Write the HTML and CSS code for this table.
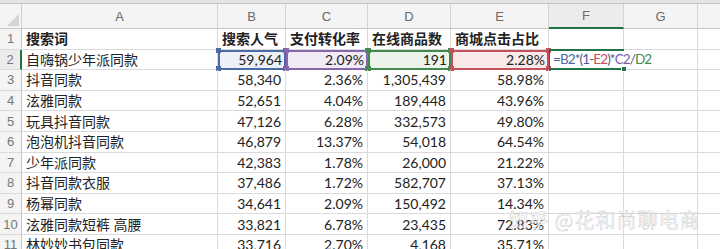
FILE: index.html
```html
<!DOCTYPE html>
<html lang="zh">
<head>
<meta charset="utf-8">
<link rel="stylesheet" href="styles.css">
</head>
<body>
<div class="frame">
  <div class="topband"></div>
  <div class="sheet">
    <div class="corner"><svg width="12" height="12" viewBox="0 0 12 12"><polygon points="12,0 12,12 0,12" fill="#d4d4d4"/></svg></div>
    <div class="ch">A</div><div class="ch">B</div><div class="ch">C</div><div class="ch">D</div><div class="ch">E</div><div class="ch ch-active">F</div><div class="ch">G</div><div class="ch ch-last"></div>

    <div class="rh">1</div>
    <div class="c b">搜索词</div><div class="c b">搜索人气</div><div class="c b">支付转化率</div><div class="c b">在线商品数</div><div class="c b">商城点击占比</div><div class="c"></div><div class="c"></div><div class="c last"></div>

    <div class="rh rh-active">2</div>
    <div class="c">自嗨锅少年派同款</div>
    <div class="c n ref ref-blue">59,964<i class="h tl"></i><i class="h tr"></i><i class="h bl"></i><i class="h br"></i></div>
    <div class="c n ref ref-purple">2.09%<i class="h tl"></i><i class="h tr"></i><i class="h bl"></i><i class="h br"></i></div>
    <div class="c n ref ref-green">191<i class="h tl"></i><i class="h tr"></i><i class="h bl"></i><i class="h br"></i></div>
    <div class="c n ref ref-red">2.28%<i class="h tl"></i><i class="h tr"></i><i class="h bl"></i><i class="h br"></i></div>
    <div class="c active"><span class="formula"><span class="f-op">=</span><span class="f-blue">B2</span><span class="f-op">*(1-</span><span class="f-red">E2</span><span class="f-op">)*</span><span class="f-purple">C2</span><span class="f-op">/</span><span class="f-green">D2</span></span><i class="fill"></i></div>
    <div class="c noleft"></div><div class="c last"></div>

    <div class="rh">3</div>
    <div class="c">抖音同款</div><div class="c n">58,340</div><div class="c n">2.36%</div><div class="c n">1,305,439</div><div class="c n">58.98%</div><div class="c"></div><div class="c"></div><div class="c last"></div>

    <div class="rh">4</div>
    <div class="c">泫雅同款</div><div class="c n">52,651</div><div class="c n">4.04%</div><div class="c n">189,448</div><div class="c n">43.96%</div><div class="c"></div><div class="c"></div><div class="c last"></div>

    <div class="rh">5</div>
    <div class="c">玩具抖音同款</div><div class="c n">47,126</div><div class="c n">6.28%</div><div class="c n">332,573</div><div class="c n">49.80%</div><div class="c"></div><div class="c"></div><div class="c last"></div>

    <div class="rh">6</div>
    <div class="c">泡泡机抖音同款</div><div class="c n">46,879</div><div class="c n">13.37%</div><div class="c n">54,018</div><div class="c n">64.54%</div><div class="c"></div><div class="c"></div><div class="c last"></div>

    <div class="rh">7</div>
    <div class="c">少年派同款</div><div class="c n">42,383</div><div class="c n">1.78%</div><div class="c n">26,000</div><div class="c n">21.22%</div><div class="c"></div><div class="c"></div><div class="c last"></div>

    <div class="rh">8</div>
    <div class="c">抖音同款衣服</div><div class="c n">37,486</div><div class="c n">1.72%</div><div class="c n">582,707</div><div class="c n">37.13%</div><div class="c"></div><div class="c"></div><div class="c last"></div>

    <div class="rh">9</div>
    <div class="c">杨幂同款</div><div class="c n">34,641</div><div class="c n">2.09%</div><div class="c n">150,492</div><div class="c n">14.34%</div><div class="c"></div><div class="c"></div><div class="c last"></div>

    <div class="rh">10</div>
    <div class="c">泫雅同款短裤 高腰</div><div class="c n">33,821</div><div class="c n">6.78%</div><div class="c n">23,435</div><div class="c n">72.83%</div><div class="c"></div><div class="c"></div><div class="c last"></div>

    <div class="rh">11</div>
    <div class="c">林妙妙书包同款</div><div class="c n">33,716</div><div class="c n">2.70%</div><div class="c n">4,168</div><div class="c n">35.71%</div><div class="c"></div><div class="c"></div><div class="c last"></div>
  </div>
  <div class="watermark"><span class="wm-logo">知乎</span> @花和尚聊电商</div>
</div>
</body>
</html>
```
FILE: styles.css
```css
* { box-sizing: border-box; }
html, body { margin: 0; padding: 0; background: #fff; }
body { width: 720px; height: 249px; overflow: hidden; }

.frame { position: relative; width: 720px; height: 249px; overflow: hidden; }

.topband { height: 4px; background: #e4e4e4; border-bottom: 1px solid #c6c6c6; }

.sheet {
  display: grid;
  grid-template-columns: 22px 196px 68px 82px 83px 98px 75px 74px 1fr;
  grid-template-rows: 25px;
  grid-auto-rows: 20.6px;
  font-family: "Lato", "Noto Sans CJK SC", sans-serif;
  font-size: 14px;
  color: #222;
}

.corner {
  background: #f4f4f4;
  border-right: 1px solid #cfcfcf;
  border-bottom: 1px solid #c6c6c6;
  display: flex; align-items: flex-end; justify-content: flex-end;
  padding: 0 2px 2px 0;
}

.ch {
  background: #f4f4f4;
  border-right: 1px solid #d4d4d4;
  border-bottom: 1px solid #c6c6c6;
  color: #6a6a6a;
  font-family: "Liberation Sans", sans-serif;
  font-size: 13px;
  display: flex; align-items: center; justify-content: center;
}
.ch-active { border-bottom: 2px solid #217346; background: #ececec; }
.ch-last { border-right: none; }

.rh {
  background: #f4f4f4;
  border-right: 1px solid #c6c6c6;
  border-bottom: 1px solid #dadada;
  color: #777;
  font-family: "Liberation Sans", sans-serif;
  font-size: 13px;
  display: flex; align-items: center; justify-content: center;
}
.rh-active { border-right: 2px solid #217346; background: #ececec; }

.c {
  position: relative;
  border-right: 1px solid #dadada;
  border-bottom: 1px solid #dadada;
  padding: 0 4px;
  display: flex; align-items: center;
  white-space: nowrap;
  line-height: 1;
  padding-top: 1px;
}
.c.last { border-right: none; }
.c.b { font-weight: 700; overflow: visible; }
.c.n { justify-content: flex-end; padding-right: 4px; }
.c.noleft { }

.ref { border-right: none; }
.ref-blue { background: #eef0f7; outline: 2px solid #4e6aa6; outline-offset: -2px; }
.ref-purple { background: #f1ebf6; outline: 2px solid #8766ad; outline-offset: -2px; }
.ref-green { background: #ebf3eb; outline: 2px solid #3f8a4c; outline-offset: -2px; }
.ref-red { background: #f9e9e9; outline: 2px solid #c3505a; outline-offset: -2px; }

.h { position: absolute; width: 5px; height: 5px; }
.ref-blue .h { background: #4e6aa6; }
.ref-purple .h { background: #8766ad; }
.ref-green .h { background: #3f8a4c; }
.ref-red .h { background: #c3505a; }
.h.tl { left: -2px; top: -2px; }
.h.tr { right: -2px; top: -2px; }
.h.bl { left: -2px; bottom: -2px; }
.h.br { right: -2px; bottom: -2px; }

.active {
  border-top: 2px solid #217346;
  border-bottom: 2px solid #217346;
  border-left: 1px solid #217346;
  border-right: none;
  margin-top: -1px;
  overflow: visible;
  z-index: 2;
  padding-left: 3px;
}
.formula { position: relative; z-index: 3; font-size: 13.5px; letter-spacing: -0.9px; }
.f-op { color: #4a5c8c; }
.f-blue { color: #4e6aa6; }
.f-red { color: #c3505a; }
.f-purple { color: #7a5fa8; }
.f-green { color: #3f8a4c; }
.fill { position: absolute; right: -3px; bottom: -4px; width: 6px; height: 6px; background: #217346; border: 1px solid #fff; }

.watermark {
  position: absolute;
  left: 509px; top: 205px;
  font-family: "Noto Sans CJK SC", sans-serif;
  font-size: 20px;
  color: rgba(252, 252, 252, 0.7);
  -webkit-text-stroke: 0.6px rgba(120, 120, 120, 0.35);
  white-space: nowrap;
  letter-spacing: 1px;
}
.wm-logo { font-weight: 700; font-size: 19px; }
```
